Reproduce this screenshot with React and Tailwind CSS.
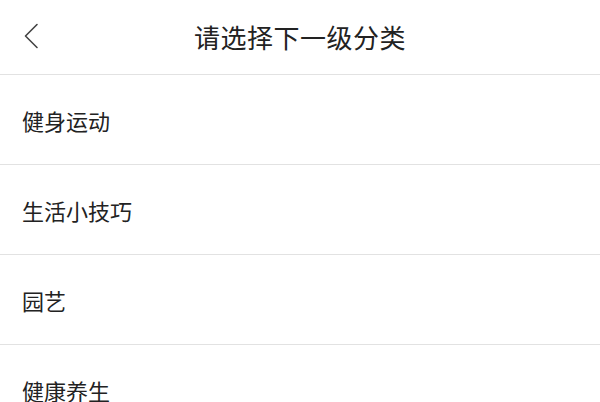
const categories = ['健身运动', '生活小技巧', '园艺', '健康养生'];

export default function App() {
  return (
    <div
      className="w-[600px] h-[402px] overflow-hidden bg-white text-[#222]"
      style={{ fontFamily: '"Noto Sans CJK SC", "Noto Sans", sans-serif' }}
    >
      <div className="relative h-[75px] flex items-center justify-center border-b-[1.5px] border-[#e2e2e2]">
        <button className="absolute left-[20px] top-[22px] w-[22px] h-[28px] flex items-center justify-center">
          <svg width="16" height="26" viewBox="0 0 16 26" fill="none">
            <path d="M14 1.5 L2.5 13 L14 24.5" stroke="#444" strokeWidth="1.6" strokeLinecap="round" strokeLinejoin="round" />
          </svg>
        </button>
        <h1 className="text-[26px] leading-none font-normal tracking-[0.5px] text-[#222] -mt-[1px]">请选择下一级分类</h1>
      </div>
      <ul>
        {categories.map((name) => (
          <li
            key={name}
            className="h-[90px] flex items-center px-[22px] border-b-[1.5px] border-[#e2e2e2] text-[22px] leading-none text-[#222]"
          >
            {name}
          </li>
        ))}
      </ul>
    </div>
  );
}
